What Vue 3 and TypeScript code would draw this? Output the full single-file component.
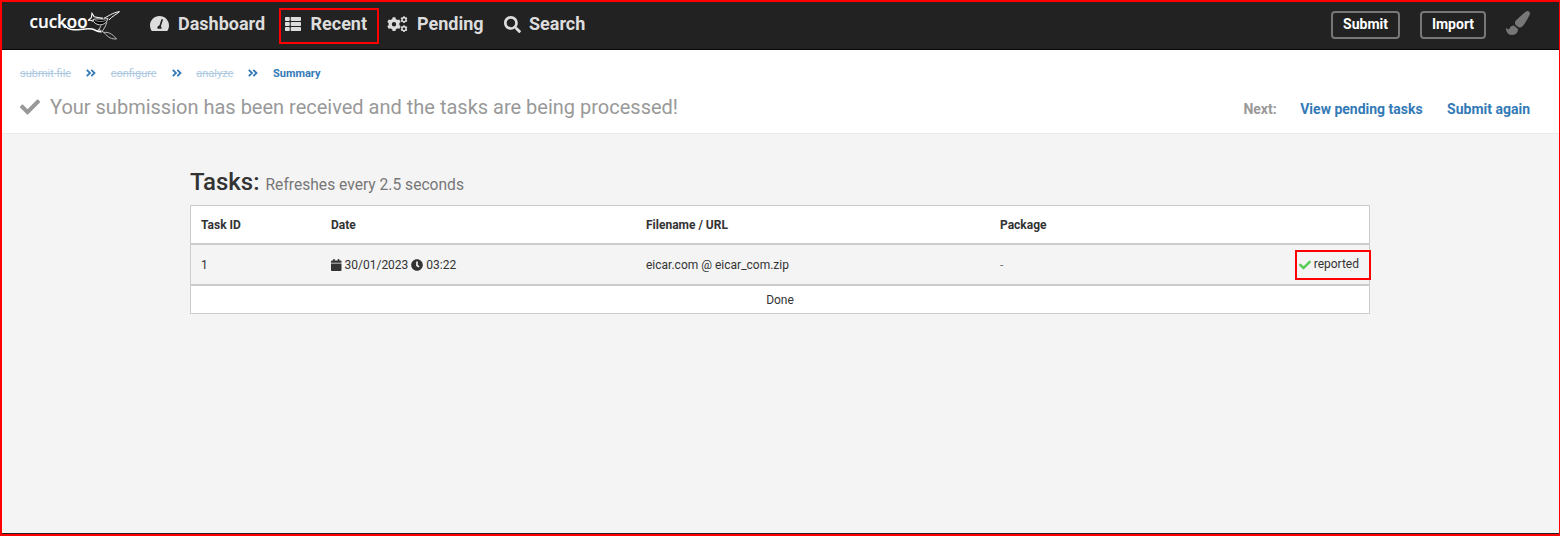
<script setup lang="ts">
interface NavItem {
  label: string
  icon: 'dial' | 'list' | 'cogs' | 'search'
}

interface Task {
  id: number
  date: string
  time: string
  filename: string
  pkg: string
  status: string
}

const navItems: NavItem[] = [
  { label: 'Dashboard', icon: 'dial' },
  { label: 'Recent', icon: 'list' },
  { label: 'Pending', icon: 'cogs' },
  { label: 'Search', icon: 'search' },
]

const steps: string[] = ['submit file', 'configure', 'analyze']

const tasks: Task[] = [
  { id: 1, date: '30/01/2023', time: '03:22', filename: 'eicar.com @ eicar_com.zip', pkg: '-', status: 'reported' },
]

const checkPath =
  'M173.9 439.4l-166.4-166.4c-10-10-10-26.2 0-36.2l36.2-36.2c10-10 26.2-10 36.2 0L192 312.7 432.1 72.6c10-10 26.2-10 36.2 0l36.2 36.2c10 10 10 26.2 0 36.2l-294.4 294.4c-10 10-26.2 10-36.2 0z'

// Outline of a gear with flat teeth, centred on (cx, cy), with a round hole.
function gear(cx: number, cy: number, outer: number, inner: number, hole: number, teeth: number): string {
  const points: string[] = []
  const step = (Math.PI * 2) / teeth
  for (let i = 0; i < teeth; i++) {
    const a = i * step
    const corners: [number, number][] = [
      [inner, -0.3],
      [outer, -0.2],
      [outer, 0.2],
      [inner, 0.3],
    ]
    for (const [r, f] of corners) {
      points.push(`${(cx + r * Math.sin(a + f * step)).toFixed(2)} ${(cy - r * Math.cos(a + f * step)).toFixed(2)}`)
    }
  }
  return `M${points.join('L')}ZM${cx - hole} ${cy}a${hole} ${hole} 0 1 0 ${hole * 2} 0a${hole} ${hole} 0 1 0 ${-hole * 2} 0Z`
}

const cogsPath = [gear(7, 8.2, 7, 5.5, 2.2, 6), gear(17, 3.7, 3.5, 2.8, 1.3, 6), gear(17, 12.7, 3.5, 2.8, 1.3, 6)].join('')
</script>

<template>
  <div class="page">
    <header class="navbar">
      <a class="logo">
        <svg width="96" height="36" viewBox="26 7 96 36">
          <text class="wordmark" x="29.500" y="27.700" textLength="58" lengthAdjust="spacingAndGlyphs">cuckoo</text>
          <path class="branch" d="M64.500 24.500c2 3.800 5 5.300 9.500 5.200 8 0 13-1.700 18-.6 4 .9 5 2.800 9 2.600" />
          <path class="twig" d="M98 29l6 3.500c4-.8 8 1 12.500 6.500-4.500.3-8.500-1.500-12.500-6.500" />
          <path class="tail" d="M104 18.200c4-1.700 8-5.400 15.500-6.600-3 3-7 4.200-10.500 8.400" />
          <path class="bird" d="M93 19.500c3.500-1.500 9 .5 15-1-1 4-4.500 6.500-8.500 6.300-3.500-.3-6-2.300-6.500-5.300z" />
          <path class="head" d="M88 20.500l3.300-2.700.7-4.500 2.200 3.400c3 .6 5 1.800 8.800 1.300M88 20.500c2.500-.7 4 0 5 .7" />
          <path class="wing" d="M95 20.200c4 2 8 1.700 12-.4" />
          <path class="twig" d="M101 25.500l-2.500 5.500M107 22l-2 5-3.500 5.500" />
        </svg>
      </a>
      <nav class="nav">
        <a v-for="item in navItems" :key="item.label" class="nav-item" :class="item.icon">
          <svg v-if="item.icon === 'dial'" width="19" height="17" viewBox="0 0 576 512">
            <path fill-rule="evenodd" d="M288 32C129 32 0 161 0 320c0 52.800 14.200 102.300 39 144.800 5.700 9.600 16.400 15.200 27.500 15.200h443c11.100 0 21.800-5.600 27.500-15.200C561.800 422.300 576 372.800 576 320c0-159-129-288-288-288zM390.800 151.600l-61.400 184C343.100 347.300 352 364.500 352 384c0 11.700-3.400 22.500-8.900 32H232.900c-5.500-9.500-8.900-20.300-8.900-32 0-33.900 26.500-61.400 59.900-63.600l61.300-184c4.200-12.600 17.800-19.500 30.400-15.200 12.600 4.200 19.400 17.800 15.200 30.400z" />
          </svg>
          <svg v-else-if="item.icon === 'list'" width="18" height="18" viewBox="0 0 18 18">
            <rect x="1" y="2" width="4.700" height="4" rx=".7" /><rect x="6.700" y="2" width="10.300" height="4" rx=".7" />
            <rect x="1" y="7" width="4.700" height="4" rx=".7" /><rect x="6.700" y="7" width="10.300" height="4" rx=".7" />
            <rect x="1" y="12" width="4.700" height="4" rx=".7" /><rect x="6.700" y="12" width="10.300" height="4" rx=".7" />
          </svg>
          <svg v-else-if="item.icon === 'cogs'" width="21" height="17" viewBox="0 0 21 17">
            <path fill-rule="evenodd" :d="cogsPath" />
          </svg>
          <svg v-else width="17" height="17" viewBox="0 0 512 512">
            <path d="M505 442.700L405.300 343c-4.500-4.500-10.600-7-17-7H372c27.600-35.300 44-79.700 44-128C416 93.100 322.900 0 208 0S0 93.100 0 208s93.100 208 208 208c48.300 0 92.700-16.400 128-44v16.300c0 6.400 2.500 12.500 7 17l99.700 99.700c9.400 9.400 24.600 9.400 33.900 0l28.300-28.300c9.400-9.400 9.400-24.600.1-34zM208 336c-70.700 0-128-57.200-128-128 0-70.700 57.200-128 128-128 70.700 0 128 57.200 128 128 0 70.700-57.200 128-128 128z" />
          </svg>
          <span>{{ item.label }}</span>
        </a>
      </nav>
      <div class="actions">
        <button class="btn submit">Submit</button>
        <button class="btn import">Import</button>
        <svg class="brush" width="24" height="24" viewBox="0 0 512 512">
          <path d="M167 309.300c-40.100 2.600-76.500 17.900-97.200 72.300-2.300 6.200-8 10-14.600 10C44.100 391.600 9.800 364 0 357.300 0 439.600 37.900 512 128 512c75.900 0 128-43.800 128-120.200 0-3.100-.6-6.100-1-9.100l-88-73.400zM457.900 0c-15.200 0-29.400 6.700-40.200 16.500C213.300 199 192 203.300 192 257.100c0 13.700 3.300 26.800 8.700 38.700l63.900 53.200c7.200 1.800 14.600 3 22.400 3 62.100 0 98.100-45.500 211.100-256.500 7.400-14.300 13.900-29.800 13.900-46C512 20.600 486 0 457.900 0z" />
        </svg>
      </div>
      <div class="mark recent-mark"></div>
    </header>

    <section class="summary">
      <ol class="steps">
        <template v-for="step in steps" :key="step">
          <li class="done-step">{{ step }}</li>
          <li class="sep">
            <svg width="10" height="8" viewBox="0 0 10 8"><path d="M.8.8L4 4 .8 7.200M5.300.8L8.500 4 5.300 7.200" /></svg>
          </li>
        </template>
        <li class="current-step">Summary</li>
      </ol>
      <div class="headline">
        <svg class="tick" width="20" height="20" viewBox="0 0 512 512"><path :d="checkPath" /></svg>
        <h1>Your submission has been received and the tasks are being processed!</h1>
        <div class="next">
          <span class="next-label">Next:</span>
          <a>View pending tasks</a>
          <a>Submit again</a>
        </div>
      </div>
    </section>

    <main class="content">
      <h2>Tasks: <small>Refreshes every 2.5 seconds</small></h2>
      <div class="table">
        <div class="row head-row">
          <span>Task ID</span><span>Date</span><span>Filename / URL</span><span>Package</span><span></span>
        </div>
        <div v-for="task in tasks" :key="task.id" class="row body-row">
          <span>{{ task.id }}</span>
          <span class="when">
            <svg class="cal" width="10.500" height="12" viewBox="0 0 448 512">
              <path d="M12 192h424c6.600 0 12 5.400 12 12v260c0 26.500-21.500 48-48 48H48c-26.500 0-48-21.500-48-48V204c0-6.600 5.400-12 12-12zm436-44v-36c0-26.500-21.500-48-48-48h-48V12c0-6.600-5.400-12-12-12h-40c-6.600 0-12 5.400-12 12v52H160V12c0-6.600-5.400-12-12-12h-40c-6.600 0-12 5.400-12 12v52H48C21.500 64 0 85.500 0 112v36c0 6.600 5.400 12 12 12h424c6.600 0 12-5.400 12-12z" />
            </svg>
            <span>{{ task.date }}</span>
            <svg class="clock" width="12" height="12" viewBox="0 0 512 512">
              <path d="M256 8C119 8 8 119 8 256s111 248 248 248 248-111 248-248S393 8 256 8zm57.100 350.100L224.900 294c-3.100-2.300-4.900-5.900-4.900-9.700V116c0-6.600 5.400-12 12-12h48c6.600 0 12 5.400 12 12v137.700l63.500 46.200c5.400 3.900 6.500 11.400 2.600 16.800l-28.200 38.800c-3.900 5.300-11.400 6.500-16.800 2.600z" />
            </svg>
            <span>{{ task.time }}</span>
          </span>
          <span>{{ task.filename }}</span>
          <span class="pkg">{{ task.pkg }}</span>
          <span class="status">
            <svg width="12" height="12" viewBox="0 0 512 512"><path :d="checkPath" /></svg>
            {{ task.status }}
          </span>
          <div class="mark status-mark"></div>
        </div>
        <div class="footer">Done</div>
      </div>
    </main>
    <div class="frame"></div>
  </div>
</template>

<style>
body {
  margin: 0;
  background: #f4f4f4;
}
</style>

<style scoped>
.page {
  position: relative;
  box-sizing: border-box;
  width: 1560px;
  height: 536px;
  padding: 2px 0 0;
  overflow: hidden;
  background: #f4f4f4;
  color: #333;
  font-family: Roboto, "Liberation Sans", sans-serif;
  font-size: 12px;
}
.page * {
  box-sizing: border-box;
}
svg {
  display: block;
  flex: none;
}
.frame {
  position: absolute;
  inset: 0;
  border: solid #f00;
  border-width: 2px 1px 2px 2px;
  box-shadow: inset 0 -1px #222;
  pointer-events: none;
}
.mark {
  position: absolute;
  border: 2px solid #f00;
}
.navbar {
  position: relative;
  display: flex;
  height: 48px;
  padding-left: 26px;
  background: #222;
  border-bottom: 1px solid #080808;
}
.logo {
  width: 124px;
  padding-top: 5px;
}
.wordmark {
  fill: #fff;
  stroke: #fff;
  stroke-width: 0.2px;
  font: 600 18.5px "Open Sans", sans-serif;
}
.branch,
.twig,
.wing,
.head {
  fill: none;
  stroke: #fff;
  stroke-width: 1.5px;
}
.head {
  stroke-width: 1.1px;
}
.twig {
  stroke: #ddd;
  stroke-width: 0.8px;
}
.wing {
  stroke: #ddd;
  stroke-width: 0.6px;
}
.bird {
  fill: #000;
  stroke: #fff;
  stroke-width: 0.8px;
}
.tail {
  fill: #222;
  stroke: #fff;
  stroke-width: 1px;
}
.nav {
  display: flex;
  height: 44px;
}
.nav-item {
  display: flex;
  align-items: center;
  color: #ddd;
  fill: #ddd;
  font-size: 18px;
  font-weight: 700;
  white-space: nowrap;
}
.nav-item span {
  margin-left: 9px;
  padding-bottom: 2px;
}
.nav-item.dial {
  width: 134px;
}
.nav-item.dial svg {
  margin-bottom: 1px;
}
.nav-item.list {
  width: 103px;
}
.nav-item.list span {
  margin-left: 8.5px;
}
.nav-item.cogs {
  width: 116.5px;
}
.nav-item.search span {
  margin-left: 8.5px;
}
.actions {
  display: flex;
  align-items: flex-start;
  margin-left: auto;
  padding: 9px 30px 0 0;
}
.btn {
  height: 28px;
  padding: 0 0 2px;
  background: none;
  border: 2px solid #777;
  border-radius: 4px;
  color: #fff;
  font: 700 14px/22px Roboto, sans-serif;
}
.btn.submit {
  width: 69px;
  margin-right: 20px;
}
.btn.import {
  width: 66px;
  margin-right: 20px;
}
.brush {
  fill: #777;
}
.recent-mark {
  left: 279px;
  top: 6px;
  width: 100px;
  height: 36px;
}
.summary {
  height: 84px;
  padding: 15px 30px 0 20px;
  background: #fff;
  border-bottom: 1px solid #ebebeb;
}
.steps {
  display: flex;
  align-items: center;
  height: 16px;
  margin: 0;
  padding: 0;
  list-style: none;
  font-size: 11px;
  color: #337ab7;
}
.done-step {
  color: #adcae2;
  text-decoration: line-through;
}
.sep {
  margin: 0 14.6px 0 15px;
}
.sep path {
  fill: none;
  stroke: #337ab7;
  stroke-width: 1.8px;
}
.current-step {
  font-weight: 700;
}
.headline {
  display: flex;
  align-items: center;
  height: 52px;
  color: #999;
}
.tick {
  fill: #999;
}
h1 {
  margin: 0 0 0 10px;
  font-size: 20px;
  font-weight: 400;
  white-space: nowrap;
}
.next {
  display: flex;
  margin-left: auto;
  padding-top: 4px;
  font-size: 14px;
  font-weight: 700;
}
.next a {
  margin-left: 24.4px;
  color: #337ab7;
}
.next-label + a {
  margin-left: 23.6px;
}
.content {
  width: 1180px;
  margin: 0 auto;
  padding-top: 32px;
}
h2 {
  height: 39px;
  margin: 0;
  font-size: 24px;
  font-weight: 500;
  line-height: 32px;
}
small {
  color: #777;
  font-size: 15.6px;
  font-weight: 400;
}
.table {
  border: 1px solid #ccc;
  background: #fff;
}
.row {
  position: relative;
  display: grid;
  grid-template-columns: 130px 315px 354px 200px 1fr;
  align-items: center;
  padding: 0 10px;
  border-bottom: 2px solid #ccc;
}
.head-row {
  height: 39px;
  font-weight: 700;
}
.body-row {
  height: 41px;
  background: #f4f4f4;
}
.when {
  display: flex;
  align-items: center;
  fill: #333;
}
.cal {
  margin-right: 3px;
}
.clock {
  margin: 0 3px;
}
.pkg {
  color: #777;
}
.status {
  display: flex;
  align-items: center;
  justify-content: flex-end;
  gap: 3px;
  fill: #5c5;
  padding-bottom: 2px;
}
.status svg {
  margin-top: 3px;
}
.status-mark {
  left: 1104px;
  top: 5px;
  width: 76px;
  height: 30px;
}
.footer {
  height: 27px;
  padding-top: 1px;
  line-height: 27px;
  text-align: center;
}
</style>
